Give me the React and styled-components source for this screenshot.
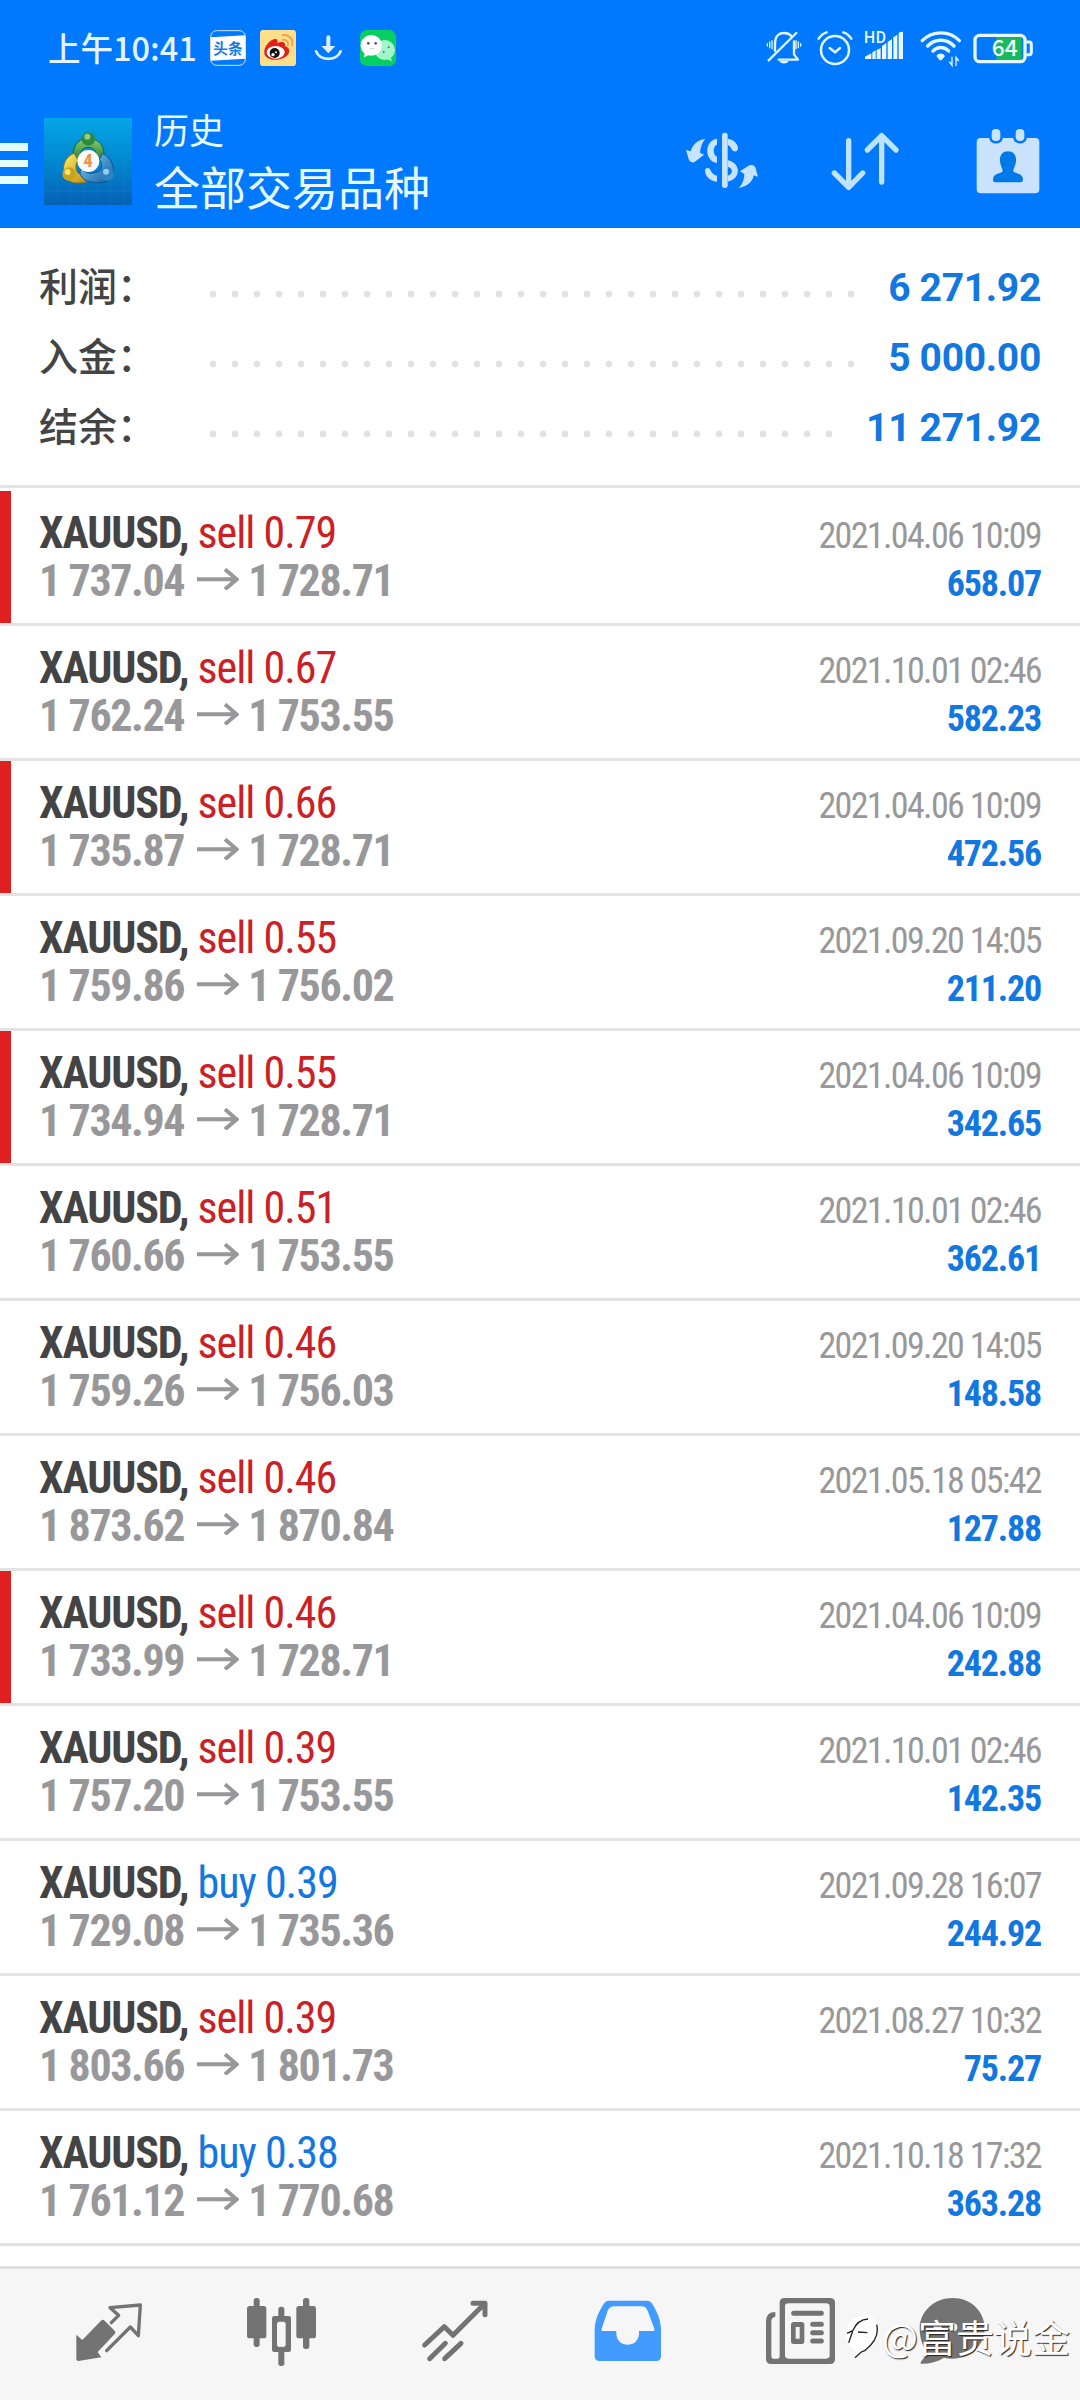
import React from "react";
import styled, { createGlobalStyle } from "styled-components";

const summary = [
  { label: "利润：", value: "6 271.92" },
  { label: "入金：", value: "5 000.00" },
  { label: "结余：", value: "11 271.92" },
];

const deals = [
  { type: "sell", volume: "0.79", open: "1 737.04", close: "1 728.71", time: "2021.04.06 10:09", profit: "658.07", marked: true },
  { type: "sell", volume: "0.67", open: "1 762.24", close: "1 753.55", time: "2021.10.01 02:46", profit: "582.23" },
  { type: "sell", volume: "0.66", open: "1 735.87", close: "1 728.71", time: "2021.04.06 10:09", profit: "472.56", marked: true },
  { type: "sell", volume: "0.55", open: "1 759.86", close: "1 756.02", time: "2021.09.20 14:05", profit: "211.20" },
  { type: "sell", volume: "0.55", open: "1 734.94", close: "1 728.71", time: "2021.04.06 10:09", profit: "342.65", marked: true },
  { type: "sell", volume: "0.51", open: "1 760.66", close: "1 753.55", time: "2021.10.01 02:46", profit: "362.61" },
  { type: "sell", volume: "0.46", open: "1 759.26", close: "1 756.03", time: "2021.09.20 14:05", profit: "148.58" },
  { type: "sell", volume: "0.46", open: "1 873.62", close: "1 870.84", time: "2021.05.18 05:42", profit: "127.88" },
  { type: "sell", volume: "0.46", open: "1 733.99", close: "1 728.71", time: "2021.04.06 10:09", profit: "242.88", marked: true },
  { type: "sell", volume: "0.39", open: "1 757.20", close: "1 753.55", time: "2021.10.01 02:46", profit: "142.35" },
  { type: "buy", volume: "0.39", open: "1 729.08", close: "1 735.36", time: "2021.09.28 16:07", profit: "244.92" },
  { type: "sell", volume: "0.39", open: "1 803.66", close: "1 801.73", time: "2021.08.27 10:32", profit: "75.27" },
  { type: "buy", volume: "0.38", open: "1 761.12", close: "1 770.68", time: "2021.10.18 17:32", profit: "363.28" },
];

// every icon is drawn on a grid of three units per pixel
const Icon = ({ box, children }) => {
  const [, , w, h] = box.split(" ").map(Number);
  return (
    <svg width={w / 3} height={h / 3} viewBox={box} fill="none">
      {children}
    </svg>
  );
};

const ToutiaoIcon = () => (
  <Icon box="630 84 108 120">
    <rect x="632" y="92" width="104" height="104" rx="18" stroke="#cfe6ff" strokeWidth="3" />
    <path d="M632 112L736 106V176L632 182Z" fill="#fff" />
    <text x="684" y="161" textAnchor="middle" fontSize="44" fontWeight="700" fill="#1478e6" fontFamily="Noto Sans CJK SC, sans-serif">
      头条
    </text>
  </Icon>
);

const WeiboIcon = () => (
  <Icon box="780 84 108 120">
    <rect x="780" y="90" width="108" height="108" rx="10" fill="#ffdf8a" />
    <path d="M848 106C866 102 882 118 876 136" stroke="#f0a04b" strokeWidth="6" strokeLinecap="round" />
    <path d="M847 120C858 117 867 126 864 136" stroke="#f0a04b" strokeWidth="5" strokeLinecap="round" />
    <path d="M824 117C833 115 834 123 832 129C844 124 858 125 855 138C869 142 872 155 862 166C848 182 812 184 798 170C784 154 802 122 824 117Z" fill="#e0201b" />
    <ellipse cx="827" cy="157" rx="27" ry="19" fill="#fff" />
    <circle cx="824" cy="159" r="15" fill="#111" />
    <circle cx="819" cy="164" r="5" fill="#fff" />
    <circle cx="828" cy="157" r="3" fill="#fff" />
  </Icon>
);

const DownloadIcon = () => (
  <Icon box="930 84 108 120">
    <path d="M985 112V146" stroke="#dcf0ff" strokeWidth="12" strokeLinecap="round" />
    <path d="M964 138H1006L985 160Z" fill="#dcf0ff" />
    <path d="M948 154C960 184 1010 184 1022 154" stroke="#dcf0ff" strokeWidth="8" strokeLinecap="round" />
  </Icon>
);

const WechatIcon = () => (
  <Icon box="1080 84 108 120">
    <rect x="1080" y="90" width="108" height="108" rx="20" fill="#05cf62" />
    <ellipse cx="1154" cy="150" rx="31" ry="30" fill="#a5f5ca" />
    <path d="M1172 172L1176 184L1160 178Z" fill="#a5f5ca" />
    <ellipse cx="1114" cy="136" rx="32" ry="31" fill="#fff" />
    <path d="M1094 158L1092 172L1108 164Z" fill="#fff" />
    <circle cx="1105" cy="130" r="4" fill="#456" />
    <circle cx="1127" cy="130" r="4" fill="#456" />
    <circle cx="1151" cy="156" r="3" fill="#1b9a56" />
    <circle cx="1166" cy="142" r="3" fill="#1b9a56" />
    <circle cx="1113" cy="146" r="2" fill="#9ab" />
    <circle cx="1120" cy="146" r="2" fill="#9ab" />
  </Icon>
);

const MuteIcon = () => (
  <Icon box="318 84 118 120">
    <g stroke="#e2f6ff" strokeWidth="7" strokeLinecap="round" strokeLinejoin="round">
      <path d="M345 152V130C345 106 360 99 372 99C382 99 390 103 394 108" />
      <path d="M356 179H414L402 163V124" />
      <path d="M409 99L326 181" />
      <path d="M336 122V146M408 122V146" strokeWidth="4" />
      <path d="M329 126V143M415 126V143" strokeWidth="4" />
      <path d="M322 131V138M422 131V138" strokeWidth="4" />
    </g>
    <path d="M358 183H386C382 193 362 193 358 183Z" fill="#e2f6ff" />
  </Icon>
);

const AlarmIcon = () => (
  <Icon box="468 84 112 120">
    <g stroke="#e2f6ff" strokeWidth="7.5" strokeLinecap="round" strokeLinejoin="round">
      <circle cx="525" cy="150" r="42" />
      <path d="M509 144L525 157L540 144" />
      <path d="M476 116C482 107 490 100 500 97M574 116C568 107 560 100 550 97" />
    </g>
  </Icon>
);

const SignalIcon = () => (
  <Icon box="612 84 136 120">
    <path d="M615 177V170L634 160V177ZM637 177V157L647 151V177ZM650 177V150L662 144V177ZM666 177V138L679 129V177ZM683 177V126L696 117V177ZM700 177V112L712 104V177ZM716 177V100C716 96 729 93 729 97V177Z" fill="#e6f7ff" />
    <text x="612" y="129" fontSize="47" fontWeight="500" letterSpacing="2" fill="#e6f7ff" stroke="#0079ff" strokeWidth="5" paintOrder="stroke" fontFamily="Roboto, sans-serif">
      HD
    </text>
  </Icon>
);

const WifiIcon = () => (
  <Icon box="780 84 126 120">
    <g stroke="#e6f7ff" strokeWidth="10" strokeLinecap="round">
      <path d="M787 122C818 91 868 91 898 122" />
      <path d="M803 138C825 115 860 115 882 138" />
      <path d="M819 153C833 139 852 139 866 153" />
    </g>
    <path d="M829 168C836 158 848 158 855 168L846 179C843 181 841 181 838 179Z" fill="#e6f7ff" />
    <path d="M876 170V196L868 185M888 198V172L896 183" stroke="#e6f7ff" strokeWidth="4" />
  </Icon>
);

const BatteryIcon = () => (
  <Icon box="938 84 182 120">
    <rect x="1008" y="112" width="76" height="68" fill="#17b95e" />
    <rect x="944" y="106" width="150" height="79" rx="14" stroke="#e6f7ff" strokeWidth="10" />
    <path d="M1098 126H1107Q1113 126 1113 134V156Q1113 164 1107 164H1098" stroke="#e6f7ff" strokeWidth="9" />
    <text x="1033" y="168" textAnchor="middle" fontSize="68" fontWeight="500" fill="#eefaff" fontFamily="Noto Sans CJK SC, sans-serif">
      64
    </text>
  </Icon>
);

const LogoIcon = () => (
  <Icon box="132 356 264 261">
    <defs>
      <linearGradient id="sky" x1="0" y1="0" x2="0" y2="1">
        <stop offset="0" stopColor="#02a6e6" />
        <stop offset="0.5" stopColor="#0287cf" />
        <stop offset="1" stopColor="#0560b6" />
      </linearGradient>
      <linearGradient id="leaf" x1="0" y1="0" x2="0" y2="1">
        <stop offset="0" stopColor="#8ccf72" />
        <stop offset="1" stopColor="#1f7a34" />
      </linearGradient>
      <linearGradient id="gold" x1="0" y1="0" x2="1" y2="1">
        <stop offset="0" stopColor="#fff06a" />
        <stop offset="1" stopColor="#b98a12" />
      </linearGradient>
      <linearGradient id="sea" x1="0" y1="0" x2="1" y2="1">
        <stop offset="0" stopColor="#7fd0f7" />
        <stop offset="1" stopColor="#115c9e" />
      </linearGradient>
    </defs>
    <rect x="132" y="356" width="264" height="261" fill="url(#sky)" />
    <path d="M172 356V617M212 356V617M252 356V617M292 356V617M332 356V617M372 356V617M132 376H396M132 416H396M132 456H396M132 496H396M132 536H396M132 576H396" stroke="#3fb4ea" strokeOpacity="0.18" strokeWidth="2" />
    <path d="M222 484C214 446 228 420 265 416C302 420 320 446 308 486L290 474C290 458 282 444 265 444C248 444 240 456 240 474Z" fill="url(#leaf)" stroke="#17642c" strokeWidth="3" />
    <path d="M222 462C196 472 184 500 194 530C204 552 236 556 264 546L240 524C226 520 224 498 234 482Z" fill="url(#gold)" stroke="#8f7410" strokeWidth="3" />
    <path d="M308 462C334 476 346 504 338 530C326 554 290 554 258 544C240 532 236 518 244 508C262 526 284 524 300 514C308 504 306 490 298 480Z" fill="url(#sea)" stroke="#0e548f" strokeWidth="3" />
    <circle cx="265" cy="419" r="20" fill="#2f8a3f" />
    <circle cx="262" cy="412" r="9" fill="#8fce84" />
    <circle cx="207" cy="524" r="20" fill="#c9a21c" />
    <circle cx="203" cy="518" r="9" fill="#f6e17a" />
    <circle cx="322" cy="524" r="20" fill="#2f83bf" />
    <circle cx="318" cy="517" r="9" fill="#94cdee" />
    <circle cx="265" cy="485" r="33" fill="#fbfbf8" />
    <text x="264" y="504" textAnchor="middle" fontSize="56" fontWeight="700" fill="#f0914a" fontFamily="Roboto Condensed, sans-serif">
      4
    </text>
  </Icon>
);

const CurrencyIcon = () => (
  <Icon box="75 381 222 210">
    <g fill="#c6e3ff">
      <rect x="186" y="398" width="17" height="166" rx="8" />
      <path d="M78 450L92 454C98 434 112 420 136 416C126 428 122 440 120 458L132 464L104 486Q92 490 87 480Z" />
      <path d="M294 530L281 526C278 546 262 560 236 564C248 552 252 540 253 522L240 514L268 496Q280 492 286 502Z" />
      <path d="M171 416V434C158 438 158 464 171 470V489C132 482 132 422 171 416Z" />
      <path d="M135 510Q136 503 145 504C154 506 150 522 171 527V545C148 543 135 528 135 510Z" />
      <path d="M203 416C222 418 234 432 234 446Q232 456 222 454C212 450 214 438 203 435Z" />
      <path d="M203 481C244 488 244 538 203 545V527C220 522 220 504 203 500Z" />
    </g>
  </Icon>
);

const SortIcon = () => (
  <Icon box="510 381 222 210">
    <g stroke="#bfe2ff" strokeWidth="16" strokeLinecap="round" strokeLinejoin="round">
      <path d="M566 422V562M523 519L566 562L608 519" />
      <path d="M665 546V407M622 450L665 407L708 450" />
    </g>
  </Icon>
);

const CalendarIcon = () => (
  <Icon box="945 381 198 210">
    <path d="M962 414H988C988 436 1028 436 1028 414H1060C1060 436 1100 436 1100 414H1126Q1138 414 1138 426V567Q1138 580 1126 580H962Q950 580 950 567V426Q950 414 962 414Z" fill="#cbe2ff" />
    <rect x="995" y="387" width="26" height="36" rx="12" fill="#cbe2ff" />
    <rect x="1067" y="387" width="26" height="36" rx="12" fill="#cbe2ff" />
    <path d="M1044 454C1060 454 1070 466 1068 484C1066 500 1060 506 1060 514C1064 522 1090 518 1089 540Q1089 547 1082 547H1006Q999 547 999 540C999 518 1024 522 1028 514C1028 506 1022 500 1020 484C1018 466 1028 454 1044 454Z" fill="#0079e8" />
  </Icon>
);

const ArrowIcon = () => (
  <Icon box="587 262 126 68">
    <path d="M587 296H706M671 266L706 296L671 326" stroke="#98989a" strokeWidth="12" />
  </Icon>
);

const QuotesIcon = () => (
  <Icon box="38 48 216 216">
    <path d="M48 164L66 180L122 122Q128 117 133 122L163 152Q168 157 163 162L112 216L123 232L54 243Q48 243 48 237Z" fill="#737373" />
    <path d="M139 212L210 141L234 167L240 75L149 83L175 106L153 128" stroke="#737373" strokeWidth="10" strokeLinejoin="round" strokeLinecap="round" />
  </Icon>
);

const CandlesIcon = () => (
  <Icon box="557 48 216 216">
    <g fill="#737373">
      <rect x="580" y="54" width="18" height="147" rx="8" />
      <rect x="560" y="78" width="58" height="97" rx="8" />
      <rect x="728" y="54" width="19" height="153" rx="8" />
      <rect x="708" y="78" width="59" height="97" rx="8" />
      <rect x="654" y="80" width="18" height="40" rx="8" />
      <rect x="654" y="200" width="18" height="58" rx="8" />
      <path fillRule="evenodd" d="M642 108H685Q692 108 692 115V209Q692 216 685 216H642Q635 216 635 209V115Q635 108 642 108ZM658 125Q650 125 650 133V193Q650 201 658 201H668Q676 201 676 193V133Q676 125 668 125Z" />
    </g>
  </Icon>
);

const TrendIcon = () => (
  <Icon box="55 48 216 216">
    <g stroke="#737373" strokeWidth="15" strokeLinecap="round" strokeLinejoin="round">
      <path d="M72 195L131 140L157 166L248 75" />
      <path d="M217 70H253V104" />
      <path d="M87 236L134 190M132 236L181 190" />
    </g>
  </Icon>
);

const HistoryIcon = () => (
  <Icon box="575 48 216 216">
    <path
      fillRule="evenodd"
      d="M626 62H740Q750 62 756 72C770 94 781 120 782 146V229Q782 243 768 243H598Q583 243 583 229V146C584 120 596 94 610 72Q616 62 626 62ZM642 79Q628 79 622 92L604 146Q602 153 609 153H648V160C648 206 716 206 716 160V153H757Q764 153 762 146L742 92Q736 79 724 79Z"
      fill="#429bfe"
    />
  </Icon>
);

const NewsIcon = () => (
  <Icon box="47 48 216 216">
    <path d="M106 54H242Q257 54 257 68V237Q257 252 242 252H66Q50 252 50 237V124Q50 96 78 96V110Q68 112 66 122V228Q66 236 72 236H84Q91 236 91 228V68Q91 54 106 54ZM118 70Q107 70 107 80V226Q107 236 118 236H230Q241 236 241 226V80Q241 70 230 70Z" fill="#737373" fillRule="evenodd" />
    <g stroke="#737373" strokeWidth="15" strokeLinecap="round">
      <path d="M133 100H216M190 133H216M190 158H216M190 183H216" />
    </g>
    <path d="M133 126H157Q165 126 165 134V184Q165 192 157 192H133Q125 192 125 184V134Q125 126 133 126ZM139 141V176H151V141Z" fill="#737373" fillRule="evenodd" />
  </Icon>
);

const ChatIcon = () => (
  <Icon box="500 48 216 216">
    <path d="M610 54C664 54 706 94 706 145C706 196 664 236 610 236C600 236 592 235 584 233C562 246 540 252 514 251C512 244 530 232 532 214C518 196 511 172 511 145C511 94 556 54 610 54Z" fill="#737373" />
    <circle cx="565" cy="142" r="12" fill="#f6f6f6" />
    <circle cx="612" cy="142" r="12" fill="#f6f6f6" />
    <circle cx="658" cy="142" r="12" fill="#f6f6f6" />
  </Icon>
);

const WatermarkLogo = () => (
  <Icon box="285 112 105 141">
    <path d="M334 124C366 116 388 142 382 176C378 206 352 218 318 246L322 230C296 222 282 190 290 160C296 140 312 128 334 124Z" fill="#fff" />
    <path d="M291 176L308 168C318 146 332 134 354 133" stroke="#222" strokeWidth="4" />
    <path d="M296 204L308 170M324 172L352 174" stroke="#222" strokeWidth="4" />
    <path d="M380 150C388 182 370 208 344 228L334 232L315 249" stroke="#222" strokeWidth="4" />
  </Icon>
);

const App = () => (
  <Page>
    <GlobalStyle />
    <Header>
      <StatusBar>
        <Clock>上午10:41</Clock>
        <AppIcons>
          <ToutiaoIcon />
          <WeiboIcon />
          <DownloadIcon />
          <WechatIcon />
        </AppIcons>
        <SystemIcons>
          <MuteIcon />
          <AlarmIcon />
          <SignalIcon />
          <WifiIcon />
          <BatteryIcon />
        </SystemIcons>
      </StatusBar>
      <Toolbar>
        <MenuButton>
          <MenuLine />
          <MenuLine />
          <MenuLine />
        </MenuButton>
        <LogoIcon />
        <Titles>
          <Title>历史</Title>
          <Subtitle>全部交易品种</Subtitle>
        </Titles>
        <Actions>
          <CurrencyIcon />
          <SortIcon />
          <CalendarIcon />
        </Actions>
      </Toolbar>
    </Header>

    <Summary>
      {summary.map(({ label, value }) => (
        <SummaryRow key={label}>
          <Label>{label}</Label>
          <Dots />
          <Value>{value}</Value>
        </SummaryRow>
      ))}
    </Summary>

    <DealList>
      {deals.map((deal, index) => (
        <Deal key={index} $marked={deal.marked}>
          <DealLine>
            <Symbol>XAUUSD,</Symbol>
            <Side $type={deal.type}>
              {deal.type} {deal.volume}
            </Side>
            <Time>{deal.time}</Time>
          </DealLine>
          <DealLine>
            <Price>{deal.open}</Price>
            <ArrowIcon />
            <Price>{deal.close}</Price>
            <Profit>{deal.profit}</Profit>
          </DealLine>
        </Deal>
      ))}
    </DealList>

    <NavBar>
      <QuotesIcon />
      <CandlesIcon />
      <TrendIcon />
      <HistoryIcon />
      <NewsIcon />
      <ChatIcon />
      <Watermark>
        <WatermarkLogo />
        <span>@富贵说金</span>
      </Watermark>
    </NavBar>
  </Page>
);

const GlobalStyle = createGlobalStyle`
  * {
    box-sizing: border-box;
  }

  body {
    margin: 0;
    background: #fff;
    font-family: Roboto, "Noto Sans CJK SC", sans-serif;
  }

  svg {
    display: block;
    flex-shrink: 0;
  }
`;

const Page = styled.div`
  display: flex;
  flex-direction: column;
  width: 1080px;
  height: 2400px;
  overflow: hidden;
  background: #fff;
`;

const Header = styled.header`
  height: 228px;
  background: #0079ff;
  border-bottom: 1px solid #1a6fd0;
`;

const StatusBar = styled.div`
  display: flex;
  align-items: center;
  height: 96px;
  padding: 0 46.7px 0 48px;
`;

const Clock = styled.div`
  width: 162px;
  padding-bottom: 2px;
  font-family: "Noto Sans CJK SC", sans-serif;
  font-size: 32.5px;
  font-weight: 500;
  line-height: 40px;
  color: #e2f4ff;
  white-space: nowrap;
`;

const AppIcons = styled.div`
  display: flex;
  gap: 14px;
`;

const SystemIcons = styled.div`
  display: flex;
  gap: 10.67px;
  margin-left: auto;
`;

const Toolbar = styled.div`
  display: flex;
  align-items: center;
  height: 131px;
  padding-right: 39px;
`;

const MenuButton = styled.div`
  display: flex;
  flex-direction: column;
  gap: 9px;
  width: 44px;
  padding-top: 4px;
`;

const MenuLine = styled.div`
  width: 28px;
  height: 7.5px;
  background: #e2fbff;
`;

const Titles = styled.div`
  margin-left: 22px;
  padding-bottom: 10px;
  font-family: "Noto Sans CJK SC", sans-serif;
  font-weight: 400;
  line-height: 56px;
  color: #e6faff;
`;

const Title = styled.div`
  font-size: 35px;
`;

const Subtitle = styled.div`
  font-size: 46px;
`;

const Actions = styled.div`
  display: flex;
  gap: 71px;
  margin-left: auto;
`;

const Summary = styled.section`
  height: 260px;
  padding: 23px 39px 0;
  border-bottom: 3px solid #e3e3e3;
`;

const SummaryRow = styled.div`
  display: flex;
  align-items: center;
  height: 70px;
`;

const Label = styled.div`
  width: 163px;
  padding-bottom: 4px;
  font-family: "Noto Sans CJK SC", sans-serif;
  font-size: 39px;
  font-weight: 500;
  line-height: 56px;
  color: #444;
`;

const Dots = styled.div`
  flex: 1;
  height: 22px;
  margin: 16px 25px 0 0;
  background: radial-gradient(circle, #e2e2e2 3px, transparent 3.8px) 0 0 /
    22px 22px repeat-x;
`;

const Value = styled.div`
  padding-top: 3px;
  font-size: 39px;
  font-weight: 700;
  letter-spacing: -0.3px;
  color: #1277df;
`;

const DealList = styled.section`
  height: 1778px;
  padding-top: 3px;
`;

const Deal = styled.div`
  height: 135px;
  padding: 18px 39px 0;
  border-bottom: 3px solid #e3e3e3;
  box-shadow: ${({ $marked }) => ($marked ? "inset 11px 0 #e02020" : "none")};
`;

const DealLine = styled.div`
  display: flex;
  align-items: baseline;
  height: 48px;
  font-family: "Roboto Condensed", Roboto, sans-serif;
  font-size: 44px;
  line-height: 48px;
  letter-spacing: -1.15px;
  white-space: nowrap;
`;

const Symbol = styled.span`
  font-weight: 700;
  color: #444;
`;

const Side = styled.span`
  margin-left: 9px;
  letter-spacing: -1px;
  color: ${({ $type }) => ($type === "buy" ? "#1277df" : "#cb2025")};
`;

const Time = styled.span`
  margin-left: auto;
  font-size: 36px;
  letter-spacing: -1.65px;
  color: #98989a;
`;

const Price = styled.span`
  font-weight: 700;
  letter-spacing: -1.4px;
  color: #98989a;

  & + svg {
    align-self: flex-start;
    margin: 10.5px 9px 0 13px;
  }
`;

const Profit = styled.span`
  margin-left: auto;
  font-size: 36px;
  font-weight: 700;
  letter-spacing: -1.2px;
  color: #1277df;
`;

const NavBar = styled.nav`
  position: relative;
  display: flex;
  gap: 101.1px;
  height: 134px;
  padding: 27px 0 0 72.5px;
  background: #f6f6f6;
  border-top: 3px solid #e0e0e0;

  svg:nth-child(6) {
    margin-left: -21.5px;
  }
`;

const Watermark = styled.div`
  position: absolute;
  left: 845px;
  top: 43px;
  display: flex;
  align-items: center;
  gap: 2px;
  font-family: "Noto Sans CJK SC", sans-serif;
  font-size: 38px;
  line-height: 47px;
  color: #fff;
  text-shadow: 1px 1px 1px #222;
  white-space: nowrap;
`;

export default App;
